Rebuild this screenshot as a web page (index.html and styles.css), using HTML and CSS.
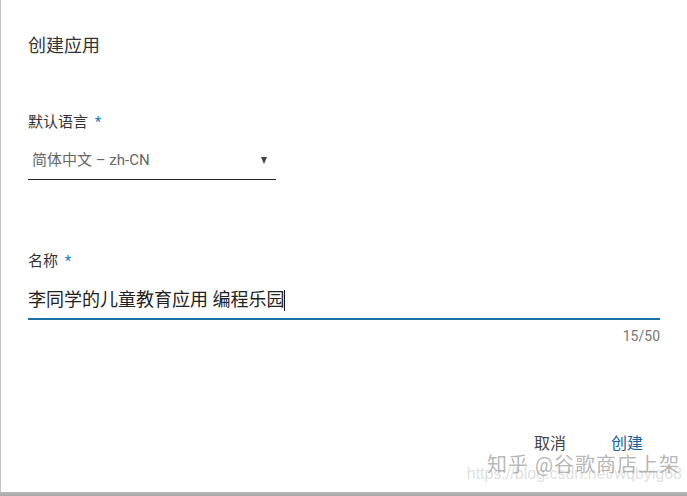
FILE: index.html
```html
<!DOCTYPE html>
<html lang="zh-CN">
<head>
<meta charset="utf-8">
<link rel="stylesheet" href="styles.css">
</head>
<body>
<div class="dialog">
  <h2 class="title">创建应用</h2>
  <div class="field lang">
    <div class="label">默认语言 <span class="req">*</span></div>
    <div class="select">
      <span class="select-text">简体中文 – zh-CN</span>
      <span class="arrow"></span>
    </div>
  </div>
  <div class="field name">
    <div class="label">名称 <span class="req">*</span></div>
    <div class="input"><span class="input-text">李同学的儿童教育应用 编程乐园</span><span class="caret"></span></div>
    <div class="counter">15/50</div>
  </div>
  <div class="actions">
    <span class="btn cancel">取消</span>
    <span class="btn ok">创建</span>
  </div>
  <div class="watermark">
    <div class="wm1">知乎 @谷歌商店上架</div>
    <div class="wm2">https://blog.csdn.net/wqbyig68</div>
  </div>
</div>
<div class="shadow"></div>
</body>
</html>
```
FILE: styles.css
```css
html, body {
  margin: 0;
  padding: 0;
  width: 687px;
  height: 496px;
  overflow: hidden;
  background: #fff;
  font-family: Roboto, "Noto Sans CJK SC", sans-serif;
}
.dialog {
  position: relative;
  box-sizing: border-box;
  width: 687px;
  height: 492px;
  border-left: 1px solid #c4c4c4;
  padding: 0 27px 0 27px;
  display: flex;
  flex-direction: column;
  background: #fff;
}
.title {
  margin: 35px 0 0 0;
  font-size: 18px;
  line-height: 22px;
  font-weight: 400;
  color: #333;
}
.field.lang {
  margin-top: 55px;
  width: 248px;
}
.label {
  font-size: 15px;
  line-height: 20px;
  color: #333;
}
.req {
  color: #1a7ac4;
  margin-left: 3px;
}
.select {
  margin-top: 18px;
  height: 29px;
  border-bottom: 1px solid #222;
  display: flex;
  align-items: flex-start;
  justify-content: space-between;
  padding: 0 9px 0 4px;
}
.select-text {
  font-size: 15px;
  line-height: 20px;
  color: #666;
}
.arrow {
  margin-top: 7px;
  width: 0;
  height: 0;
  border-left: 3.5px solid transparent;
  border-right: 3.5px solid transparent;
  border-top: 7px solid #444;
}
.field.name {
  margin-top: 71px;
}
.input {
  margin-top: 17px;
  height: 30px;
  border-bottom: 2px solid #1a70a8;
  display: flex;
  align-items: flex-start;
}
.input-text {
  font-size: 18px;
  line-height: 24px;
  color: #222;
}
.caret {
  width: 1px;
  height: 21px;
  margin-top: 2px;
  background: #111;
}
.counter {
  margin-top: 7px;
  text-align: right;
  font-size: 14px;
  line-height: 18px;
  color: #777;
}
.actions {
  margin-top: 89px;
  display: flex;
  justify-content: flex-end;
  gap: 45px;
  padding-right: 17px;
}
.btn {
  font-size: 16px;
  line-height: 20px;
}
.cancel { color: #444; }
.ok { color: #1a5f9e; }
.watermark {
  position: absolute;
  right: 5px;
  bottom: 8px;
  text-align: right;
  pointer-events: none;
}
.wm1 {
  font-size: 20px;
  line-height: 22px;
  color: rgba(120,120,120,0.55);
  letter-spacing: 1px;
  margin-right: 2px;
}
.wm2 {
  margin-top: -12px;
  font-size: 16px;
  line-height: 20px;
  color: rgba(160,160,160,0.35);
  font-family: "Liberation Sans", sans-serif;
}
.shadow {
  height: 4px;
  background: linear-gradient(to bottom, #b8b8b8, #a8a8a8);
}
```
